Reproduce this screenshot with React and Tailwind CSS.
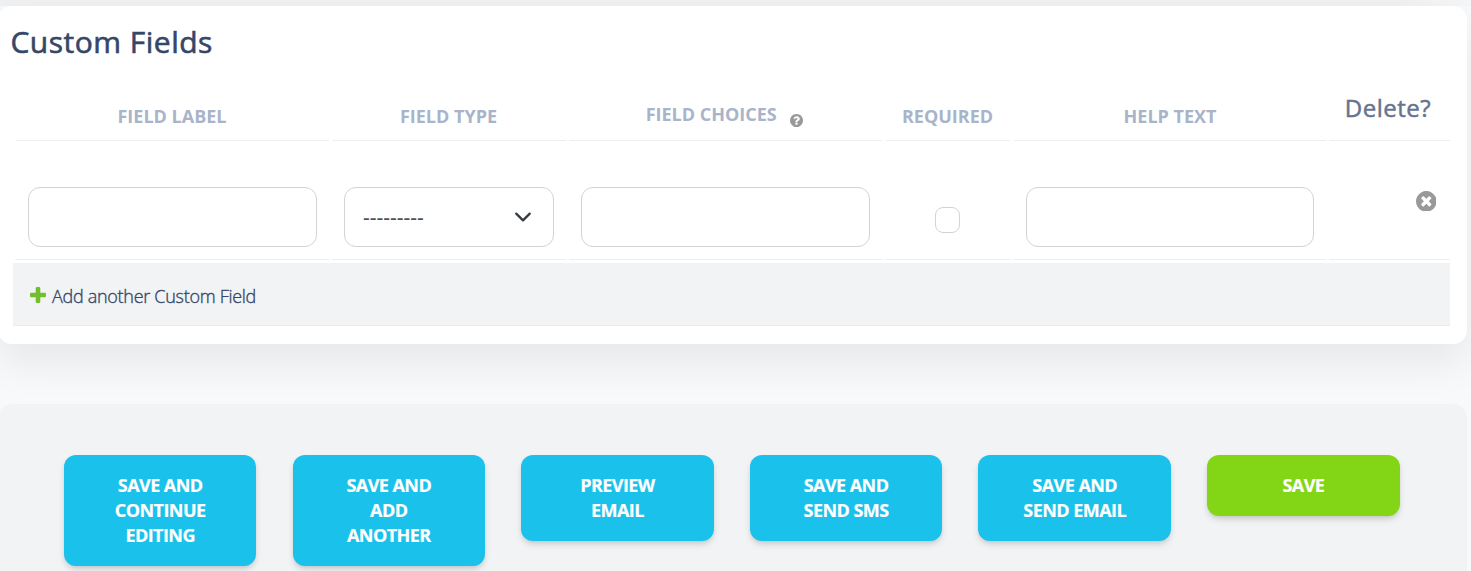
const columns = [
  { label: "Field Label", pad: "pt-[24px] pr-px" },
  { label: "Field Type", pad: "pt-[24px] pr-px" },
  { label: "Field Choices", pad: "pt-[22px] pr-[2.500px]", help: true },
  { label: "Required", pad: "pt-[24px] pr-px" },
  { label: "Help Text", pad: "pt-[24px]" },
];

const actions = [
  { lines: ["Save and", "continue", "editing"] },
  { lines: ["Save and", "add", "another"] },
  { lines: ["Preview", "Email"] },
  { lines: ["Save and", "Send SMS"] },
  { lines: ["Save and", "Send Email"] },
  { lines: ["Save"], primary: true },
];

const grid =
  "ml-[16px] grid w-[1434px] grid-cols-[313px_234px_313px_126px_312px_121px] gap-x-[3px]";
const cell = "border-b border-[#eeeeee]";
const field = "h-[60px] rounded-[12px] border border-[#d1d3d9] bg-white";

function HelpIcon() {
  return (
    <svg className="mt-[12px] ml-[13px] h-[13px] w-[13px]" viewBox="0 0 1536 1536" fill="#999999">
      <path d="M896 1248v-192q0-14-9-23t-23-9H672q-14 0-23 9t-9 23v192q0 14 9 23t23 9h192q14 0 23-9t9-23zm256-672q0-88-55.500-163T958 297t-170-41q-243 0-371 213-15 24 8 42l132 100q7 6 19 6 16 0 25-12 53-68 86-92 34-24 86-24 48 0 85.500 26t37.500 59q0 38-20 61t-68 45q-63 28-115.500 86.500T640 892v36q0 14 9 23t23 9h192q14 0 23-9t9-23q0-19 21.500-49.500T972 829q32-18 49-28.500t46-35 44.500-48 28-60.500T1152 576zm384 192q0 209-103 385.500T1153.500 1433 768 1536t-385.500-103T103 1153.500 0 768t103-385.500T382.500 103 768 0t385.500 103T1433 382.500 1536 768z" />
    </svg>
  );
}

function DeleteIcon() {
  return (
    <svg className="h-[20.600px] w-[20.600px]" viewBox="0 0 1536 1536" fill="#999999">
      <path d="M1149 994q0-26-19-45L949 768l181-181q19-19 19-45 0-27-19-46l-90-90q-19-19-46-19-26 0-45 19L768 587 587 406q-19-19-45-19-27 0-46 19l-90 90q-19 19-19 46 0 26 19 45l181 181-181 181q-19 19-19 45 0 27 19 46l90 90q19 19 46 19 26 0 45-19l181-181 181 181q19 19 45 19 27 0 46-19l90-90q19-19 19-46zm387-226q0 209-103 385.500T1153.500 1433 768 1536t-385.500-103T103 1153.500 0 768t103-385.500T382.500 103 768 0t385.500 103T1433 382.500 1536 768z" />
    </svg>
  );
}

function PlusIcon() {
  return (
    <svg className="mt-px h-4 w-4" viewBox="0 0 16 16" fill="#70bf2b">
      <path d="M7 0h2a1.300 1.300 0 0 1 1.300 1.300v4.400h4.400A1.300 1.300 0 0 1 16 7v2a1.300 1.300 0 0 1-1.300 1.300h-4.400v4.400A1.300 1.300 0 0 1 9 16H7a1.300 1.300 0 0 1-1.300-1.300v-4.400H1.300A1.300 1.300 0 0 1 0 9V7a1.300 1.300 0 0 1 1.300-1.300h4.400V1.300A1.300 1.300 0 0 1 7 0z" />
    </svg>
  );
}

export default function App() {
  return (
    <div className="h-[571px] w-full overflow-hidden bg-[#f8f9fb] font-['Open_Sans',sans-serif]">
      <div className="h-[6px] bg-linear-to-r from-[#eff0f2] from-95% to-[#f5f6f7]" />
      <section className="-ml-[2px] h-[338px] w-[1469px] rounded-[14px] bg-white pl-[2px] shadow-[0_20px_40px_rgba(0,0,0,0.07)]">
        <h2 className="h-[74px] pt-[15px] pl-[10.400px] text-[30px] leading-[42px] font-medium tracking-[0.5px] whitespace-nowrap text-[#344767] [-webkit-text-stroke:0.6px_#344767]">
          Custom Fields
        </h2>
        <div className={`${grid} h-[61px]`}>
          {columns.map((c) => (
            <div key={c.label} className={`${cell} ${c.pad} flex justify-center text-[18px] leading-[25px] font-bold whitespace-nowrap text-[#a9b3c9] uppercase`}>
              <span>{c.label}</span>
              {c.help && <HelpIcon />}
            </div>
          ))}
          <div className={`${cell} pt-[11px] pr-[3px] text-center text-[24px] leading-[34px] font-medium tracking-[0.5px] text-[#67748e] [-webkit-text-stroke:0.5px_#67748e]`}>
            Delete?
          </div>
        </div>
        <div className={`${grid} h-[119px]`}>
          <div className={`${cell} px-[12px] pt-[46px]`}>
            <div className={field} />
          </div>
          <div className={`${cell} px-[12px] pt-[46px]`}>
            <div className={`${field} flex items-center justify-between pr-[21px] pl-[18px] text-[18px] text-[#495057]`}>
              <span className="font-['Noto_Sans',sans-serif] text-[21px] leading-[24px] tracking-[0px]">---------</span>
              <svg className="h-[18px] w-[18px]" viewBox="0 0 16 16" fill="none" stroke="#343a40" strokeWidth="2" strokeLinecap="round" strokeLinejoin="round">
                <path d="m2 5 6 6 6-6" />
              </svg>
            </div>
          </div>
          <div className={`${cell} px-[12px] pt-[46px]`}>
            <div className={field} />
          </div>
          <div className={`${cell} flex justify-center pt-[66px] pr-[2px]`}>
            <div className="h-[26px] w-[25px] rounded-[8px] border border-[#d1d3d9]" />
          </div>
          <div className={`${cell} px-[12px] pt-[46px]`}>
            <div className={field} />
          </div>
          <div className={`${cell} flex justify-end pt-[49.700px] pr-[13.800px]`}>
            <DeleteIcon />
          </div>
        </div>
        <div className="mt-[3px] ml-[13px] flex h-[63px] w-[1437px] items-center gap-[6px] border-b border-[#eaebed] bg-[#f2f3f5] pl-[17px] text-[18px] font-light text-[#344767]">
          <PlusIcon />
          <span className="pt-[4px] tracking-[-0.29px] whitespace-nowrap [-webkit-text-stroke:0.35px_#344767]">
            Add another Custom Field
          </span>
        </div>
      </section>
      <section className="mt-[60px] -ml-[2px] flex h-[240px] w-[1469px] items-start gap-[36.100px] rounded-[14px] bg-[#f2f3f5] pt-[51px] pl-[65.900px]">
        {actions.map((a) => (
          <button
            key={a.lines.join(" ")}
            className={`flex w-[192.550px] shrink-0 flex-col items-center rounded-[12px] pt-[18px] pb-[18px] text-[18px] leading-[25px] font-bold tracking-[-0.55px] text-white uppercase shadow-[0_4px_7px_-1px_rgba(0,0,0,0.15),0_2px_4px_-1px_rgba(0,0,0,0.07)] [-webkit-text-stroke:0.2px_#ffffff] ${a.primary ? "bg-[#82d616]" : "bg-[#1ac1ea]"}`}
          >
            {a.lines.map((l) => (
              <span key={l}>{l}</span>
            ))}
          </button>
        ))}
      </section>
    </div>
  );
}
